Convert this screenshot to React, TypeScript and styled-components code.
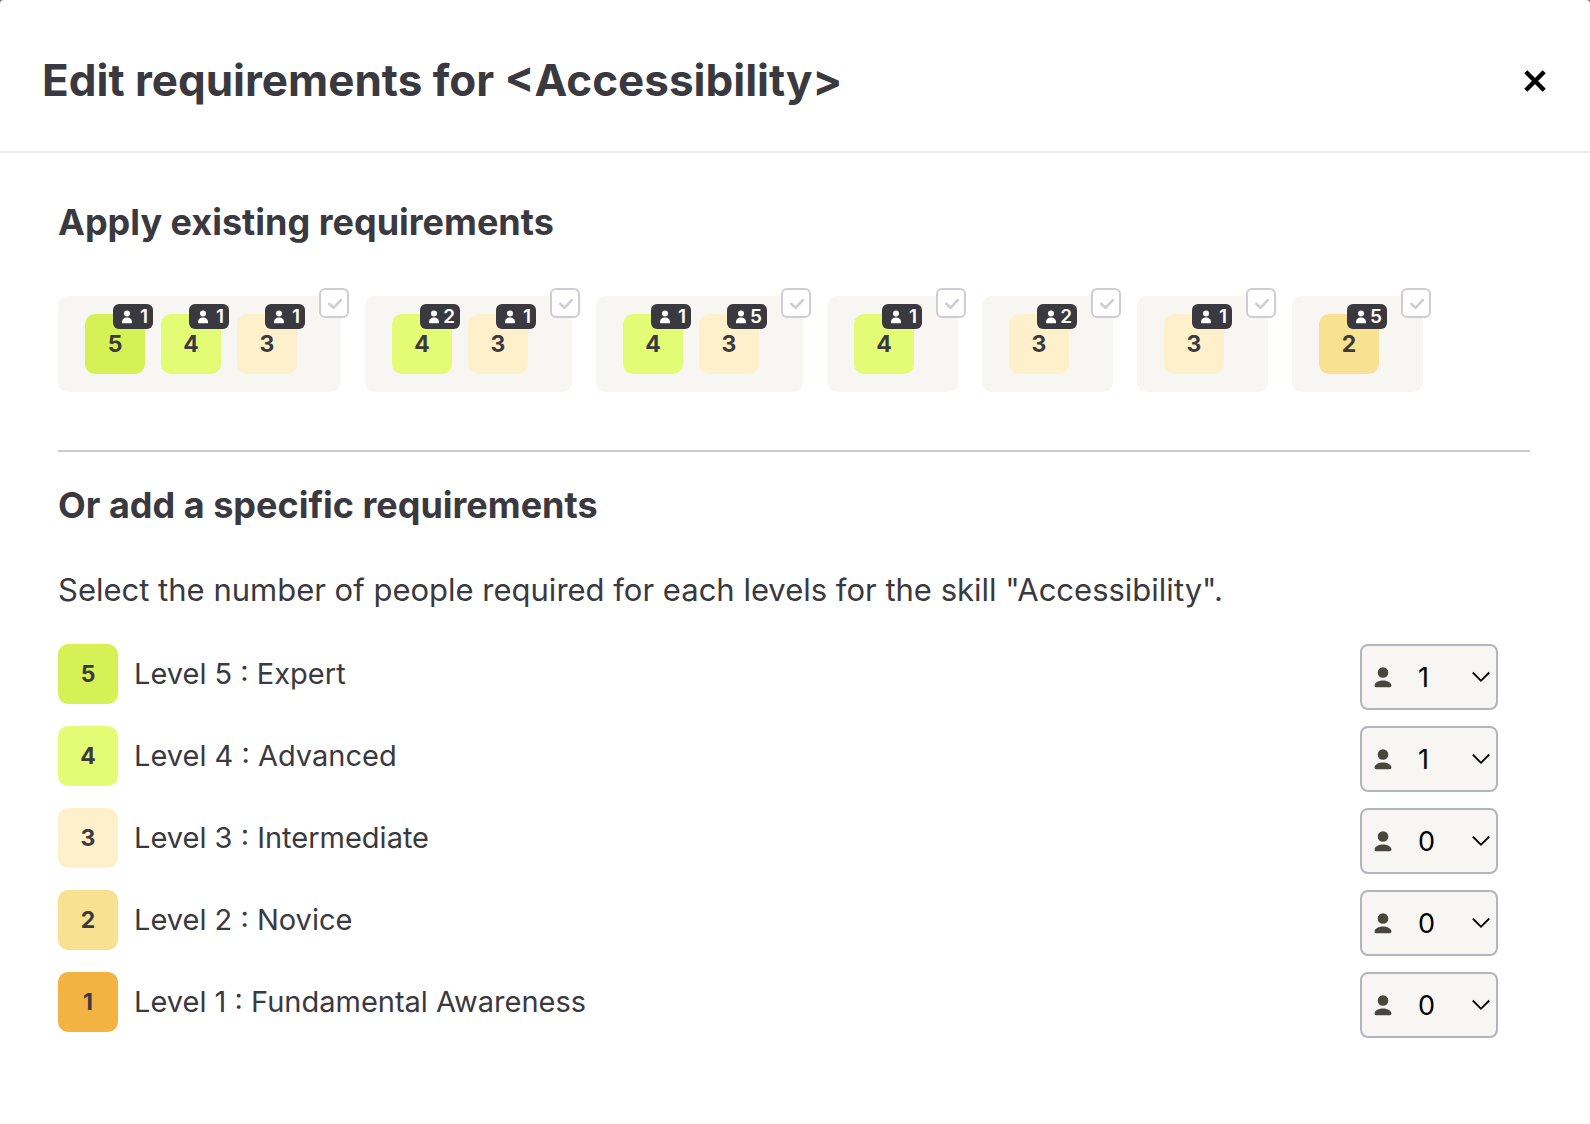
import React, { useState } from 'react';
import styled, { createGlobalStyle } from 'styled-components';

const ink = '#3b3940';
const levelColors: Record<number, string> = {
  5: '#d5f156',
  4: '#e3fb75',
  3: '#fdf0cb',
  2: '#f9e192',
  1: '#f2b342',
};

const GlobalStyle = createGlobalStyle`
  *, *::before, *::after { box-sizing: border-box; }
  body {
    margin: 0;
    background: #777;
    color: ${ink};
    font-family: Inter, "Noto Sans", sans-serif;
  }
`;

const Dialog = styled.main`
  min-height: 100vh;
  background: #fff;
  border-radius: 4px 4px 0 0;
`;

const Header = styled.header`
  display: flex;
  align-items: center;
  justify-content: space-between;
  padding: 52px 41px 43px 42px;
  border-bottom: 2px solid #eee;
`;

const Title = styled.h1`
  margin: 0;
  font-size: 44px;
  line-height: 56px;
  font-weight: 700;
`;

const CloseButton = styled.button`
  display: flex;
  padding: 5px 3px 3px;
  border: 0;
  background: none;
  color: #000;
  cursor: pointer;
`;

const Content = styled.div`
  padding: 45px 60px 60px 58px;
`;

const Heading = styled.h2`
  margin: 0;
  font-size: 36px;
  line-height: 48px;
  font-weight: 700;
`;

const Presets = styled.div`
  display: flex;
  flex-wrap: wrap;
  gap: 24px;
  margin-top: 50px;
`;

const Preset = styled.label`
  position: relative;
  display: flex;
  gap: 16px;
  padding: 18px 44px 18px 27px;
  border-radius: 10px;
  background: #f7f6f2;
  cursor: pointer;
`;

const PresetCheck = styled.input`
  position: absolute;
  top: -8px;
  right: -8px;
  width: 30px;
  height: 30px;
  margin: 0;
  appearance: none;
  border: 2px solid #cfcdd4;
  border-radius: 6px;
  background: #fff;
  cursor: pointer;
  &:checked { border-color: ${ink}; }
`;

const CheckMark = styled.svg`
  position: absolute;
  top: -8px;
  right: -8px;
  pointer-events: none;
`;

const LevelChip = styled.span<{ $level: number }>`
  position: relative;
  display: flex;
  flex: none;
  align-items: center;
  justify-content: center;
  width: 60px;
  height: 60px;
  border-radius: 10px;
  background: ${({ $level }) => levelColors[$level]};
  font-size: 23px;
  font-weight: 700;
`;

const Badge = styled.span`
  position: absolute;
  top: -10px;
  left: 28px;
  display: flex;
  align-items: center;
  justify-content: space-between;
  width: 40px;
  height: 25px;
  padding: 0 5px 0 9px;
  border-radius: 6px;
  background: ${ink};
  color: #fff;
  font-size: 19px;
  line-height: 25px;
  font-weight: 600;
  > svg { flex: none; }
`;

const Divider = styled.hr`
  height: 2px;
  margin: 58px 0 29px;
  border: 0;
  background: #ccc;
`;

const Intro = styled.p`
  margin: 41px 0 34px;
  font-size: 31px;
  line-height: 40px;
`;

const Levels = styled.div`
  display: flex;
  flex-direction: column;
  gap: 16px;
  padding-right: 32px;
`;

const LevelRow = styled.div`
  display: flex;
  align-items: flex-start;
  gap: 16px;
`;

const LevelName = styled.label`
  flex: 1;
  font-size: 29px;
  line-height: 60px;
`;

const Picker = styled.div`
  display: grid;
  align-items: center;
  width: 138px;
  height: 66px;
  > * { grid-area: 1 / 1; }
  > svg { pointer-events: none; z-index: 1; }
`;

const PersonSlot = styled.svg`
  margin-left: 14px;
`;

const ChevronSlot = styled.svg`
  justify-self: end;
  margin-right: 7px;
`;

const Select = styled.select`
  width: 100%;
  height: 100%;
  padding: 0 40px 0 56px;
  appearance: none;
  border: 2px solid #b2b5be;
  border-radius: 8px;
  background: #f7f6f2;
  color: #000;
  font-family: inherit;
  font-size: 27px;
`;

const presets: [number, number][][] = [
  [[5, 1], [4, 1], [3, 1]],
  [[4, 2], [3, 1]],
  [[4, 1], [3, 5]],
  [[4, 1]],
  [[3, 2]],
  [[3, 1]],
  [[2, 5]],
];

const levels = [
  { level: 5, name: 'Expert', count: 1 },
  { level: 4, name: 'Advanced', count: 1 },
  { level: 3, name: 'Intermediate', count: 0 },
  { level: 2, name: 'Novice', count: 0 },
  { level: 1, name: 'Fundamental Awareness', count: 0 },
];

function PresetOption({ items }: { items: [number, number][] }) {
  const [checked, setChecked] = useState(false);
  return (
    <Preset>
      {items.map(([level, people]) => (
        <LevelChip key={level} $level={level}>
          {level}
          <Badge>
            <svg width="10" height="14" viewBox="0 0 10 14" fill="currentColor" aria-hidden="true">
              <circle cx="5" cy="3.500" r="3" />
              <path d="M0 13.200v-1.500C0 9.200 2 7.400 5 7.400s5 1.800 5 4.300v1.500z" />
            </svg>
            {people}
          </Badge>
        </LevelChip>
      ))}
      <PresetCheck type="checkbox" checked={checked} onChange={(e) => setChecked(e.target.checked)} />
      <CheckMark width="30" height="30" viewBox="0 0 30 30" fill="none" aria-hidden="true">
        <path
          d="M10.200 15.800l4.300 4L21.800 12.200"
          stroke={checked ? ink : '#cfcdd4'}
          strokeWidth="2.600"
          strokeLinecap="round"
          strokeLinejoin="round"
        />
      </CheckMark>
    </Preset>
  );
}

export default function App() {
  const [counts, setCounts] = useState(levels.map((l) => l.count));
  return (
    <>
      <GlobalStyle />
      <Dialog>
        <Header>
          <Title>Edit requirements for &lt;Accessibility&gt;</Title>
          <CloseButton type="button" aria-label="Close">
            <svg width="22" height="22" viewBox="0 0 22 22" stroke="currentColor" strokeWidth="4.400" aria-hidden="true">
              <path d="M1.800 1.800l18.400 18.400M20.200 1.800L1.800 20.200" />
            </svg>
          </CloseButton>
        </Header>
        <Content>
          <Heading>Apply existing requirements</Heading>
          <Presets>
            {presets.map((items, i) => (
              <PresetOption key={i} items={items} />
            ))}
          </Presets>
          <Divider />
          <Heading>Or add a specific requirements</Heading>
          <Intro>Select the number of people required for each levels for the skill "Accessibility".</Intro>
          <Levels>
            {levels.map(({ level, name }, i) => (
              <LevelRow key={level}>
                <LevelChip $level={level}>{level}</LevelChip>
                <LevelName htmlFor={`level-${level}`}>{`Level ${level} : ${name}`}</LevelName>
                <Picker>
                  <PersonSlot width="18" height="21" viewBox="0 0 18 21" fill="#48463f" aria-hidden="true">
                    <circle cx="9" cy="5.500" r="5.300" />
                    <path d="M2.200 20.300C1 20.300.6 19.700.6 18.600c0-3 3.800-5.200 8.400-5.200s8.400 2.200 8.400 5.200c0 1.100-.4 1.700-1.600 1.700z" />
                  </PersonSlot>
                  <Select
                    id={`level-${level}`}
                    value={counts[i]}
                    onChange={(e) => setCounts(counts.map((c, j) => (j === i ? Number(e.target.value) : c)))}
                  >
                    {[0, 1, 2, 3, 4, 5].map((n) => (
                      <option key={n} value={n}>{n}</option>
                    ))}
                  </Select>
                  <ChevronSlot width="20" height="12" viewBox="0 0 20 12" fill="none" stroke="#000" strokeWidth="1.800" aria-hidden="true">
                    <path d="M1.800 1.500L10 9.800l8.200-8.300" />
                  </ChevronSlot>
                </Picker>
              </LevelRow>
            ))}
          </Levels>
        </Content>
      </Dialog>
    </>
  );
}
